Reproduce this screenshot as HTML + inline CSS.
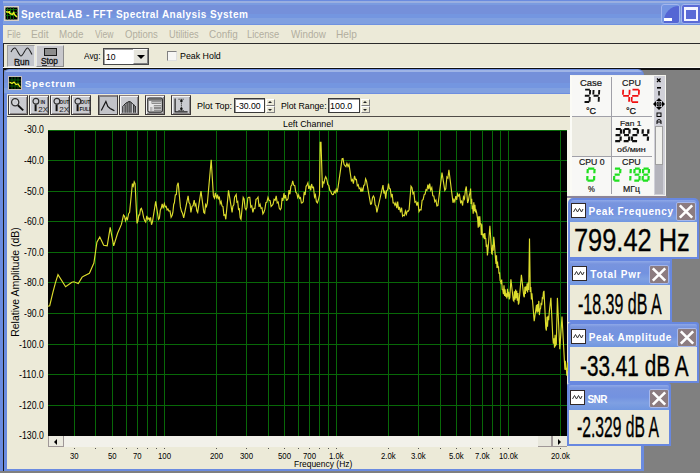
<!DOCTYPE html>
<html><head><meta charset="utf-8">
<style>
*{margin:0;padding:0;box-sizing:border-box}
html,body{width:700px;height:473px;overflow:hidden;background:#808080;font-family:"Liberation Sans",sans-serif;position:relative}
.a{position:absolute}
.tb{background:linear-gradient(#6a8bdf 0,#6a8bdf 1px,#9aafe0 1px,#9aafe0 3px,#7a9be0 3px,#7a9be0 5px,#7590da 5px,#7590da 14px,#7496e0 14px,#7496e0 18px,#80a0e0 18px,#80a0e0 24px,#6f92e0 24px)}
.ctb{background:linear-gradient(#9eb4e6 0,#9eb4e6 2px,#7490da 2px,#7490da 13px,#7496e0 13px,#7496e0 18px,#80a0e0 18px,#80a0e0 23px,#6d8ee0 23px)}
.beige{background:#ecead8}
.btn{position:absolute;top:95px;width:20px;height:20px;background:#cacbd0;border:1px solid #3c3838;border-top-color:#8a7e80;box-shadow:inset 1px 1px 0 #f4f4f4,inset -1px -1px 0 #8c8888}
.btn.p{background:#c2c3c8;box-shadow:inset 1px 1px 0 #808080}
.btn svg{position:absolute;left:0;top:0}
</style></head><body>

<div class="a tb" style="left:0;top:0;width:700px;height:25px"></div>
<div class="a" style="left:0;top:0;width:3px;height:473px;background:#6a8be0"></div>
<svg class="a" style="left:4px;top:6px" width="15" height="15" viewBox="0 0 15 15">
<rect x="0.75" y="0.75" width="13.5" height="13.5" fill="#000" stroke="#d8d0c8" stroke-width="1.5"/>
<path d="M1.5 3.5H13.5M1.5 6.5H13.5M1.5 9.5H13.5M3.5 1.5V13.5M6.5 1.5V13.5M9.5 1.5V13.5" stroke="#0a6a0a" stroke-width="0.9"/>
<path d="M2 5.6L5.2 6.5L5.4 5.2L5.7 7.5L8.4 8.4L9.8 6.5L10.3 8.1L12.8 11.1" stroke="#f0f020" stroke-width="1.4" fill="none"/>
</svg>
<div class="a" style="left:21.00px;top:15.14px;font-size:10.0px;line-height:0;font-weight:bold;color:#fff;white-space:nowrap;letter-spacing:0.455px;">SpectraLAB - FFT Spectral Analysis System</div>
<div class="a" style="left:661px;top:4px;width:19px;height:20px;border:1px solid #a2b6ee;border-radius:3px;background:#7494e2;overflow:hidden"><div style="position:absolute;left:2px;top:1px;width:30px;height:30px;border-radius:15px 0 0 0;background:#5566d4"></div></div>
<div class="a" style="left:664px;top:18px;width:8px;height:3px;background:#fff"></div>
<div class="a" style="left:681px;top:4px;width:21px;height:20px;border:1px solid #a2b6ee;border-radius:3px;background:#5a6ad6"></div>
<div class="a" style="left:684px;top:7px;width:14px;height:14px;border:2px solid #f4f4ff;border-top-width:3px;background:#5a6ad6"></div>
<div class="a beige" style="left:3px;top:25px;width:697px;height:18px"></div>
<div class="a" style="left:7.38px;top:34.43px;font-size:10.6px;line-height:0;color:#b2ae9f;white-space:nowrap;transform:scaleX(0.8025);transform-origin:0 0;">File</div>
<div class="a" style="left:31.43px;top:34.43px;font-size:10.6px;line-height:0;color:#b2ae9f;white-space:nowrap;transform:scaleX(0.9653);transform-origin:0 0;">Edit</div>
<div class="a" style="left:58.77px;top:34.43px;font-size:10.6px;line-height:0;color:#b2ae9f;white-space:nowrap;transform:scaleX(0.9243);transform-origin:0 0;">Mode</div>
<div class="a" style="left:94.52px;top:34.43px;font-size:10.6px;line-height:0;color:#b2ae9f;white-space:nowrap;transform:scaleX(0.8106);transform-origin:0 0;">View</div>
<div class="a" style="left:124.55px;top:34.43px;font-size:10.6px;line-height:0;color:#b2ae9f;white-space:nowrap;transform:scaleX(0.8989);transform-origin:0 0;">Options</div>
<div class="a" style="left:168.71px;top:34.43px;font-size:10.6px;line-height:0;color:#b2ae9f;white-space:nowrap;transform:scaleX(0.8667);transform-origin:0 0;">Utilities</div>
<div class="a" style="left:208.93px;top:34.43px;font-size:10.6px;line-height:0;color:#b2ae9f;white-space:nowrap;transform:scaleX(0.9388);transform-origin:0 0;">Config</div>
<div class="a" style="left:247.21px;top:34.43px;font-size:10.6px;line-height:0;color:#b2ae9f;white-space:nowrap;transform:scaleX(0.8832);transform-origin:0 0;">License</div>
<div class="a" style="left:290.81px;top:34.43px;font-size:10.6px;line-height:0;color:#b2ae9f;white-space:nowrap;transform:scaleX(0.9255);transform-origin:0 0;">Window</div>
<div class="a" style="left:336.14px;top:34.43px;font-size:10.6px;line-height:0;color:#b2ae9f;white-space:nowrap;transform:scaleX(0.9561);transform-origin:0 0;">Help</div>
<div class="a" style="left:3px;top:43px;width:697px;height:1px;background:#2a2a2a"></div>
<div class="a beige" style="left:3px;top:44px;width:697px;height:24px"></div>
<div class="a" style="left:3px;top:43px;width:1px;height:26px;background:#2a2a2a"></div>
<div class="a" style="left:3px;top:67px;width:697px;height:1px;background:#f8f8f0"></div>
<div class="a" style="left:3px;top:68px;width:697px;height:2px;background:#101010"></div>
<div class="a" style="left:7px;top:45px;width:28px;height:22px;background:#c4c6cc;border:1px solid #9c9c9c;border-right-color:#e8e8e8;border-bottom-color:#e8e8e8"></div>
<svg class="a" style="left:10px;top:47px" width="24" height="11" viewBox="0 0 24 11"><path d="M1 5C2.5 2 4 1 5 1C6.5 1 9 9 11 9C13 9 15.5 1 17.5 1C19 1 20.5 5 22 7.5" stroke="#202020" stroke-width="1.05" fill="none"/></svg>
<div class="a" style="left:14.30px;top:62.15px;font-size:8.5px;line-height:0;color:#111;white-space:nowrap;transform:scaleX(0.9931);transform-origin:0 0;-webkit-text-stroke:0.3px #111;">Run</div>
<div class="a" style="left:15px;top:65px;width:5px;height:1px;background:#333"></div>
<div class="a" style="left:36px;top:45px;width:28px;height:22px;background:#c8c8cc;border:1px solid #e8e8e8;border-right-color:#8c8c8c;border-bottom-color:#8c8c8c"></div>
<div class="a" style="left:44px;top:48px;width:13px;height:8px;background:#8c8c8c;border:1px solid #181818"></div>
<div class="a" style="left:41.41px;top:61.35px;font-size:8.5px;line-height:0;color:#111;white-space:nowrap;transform:scaleX(0.9643);transform-origin:0 0;-webkit-text-stroke:0.3px #111;">Stop</div>
<div class="a" style="left:42px;top:65px;width:5px;height:1px;background:#333"></div>
<div class="a" style="left:83.90px;top:56.45px;font-size:8.5px;line-height:0;color:#000;white-space:nowrap;transform:scaleX(0.9752);transform-origin:0 0;">Avg:</div>
<div class="a" style="left:103px;top:48px;width:46px;height:17px;background:#fff;border:1px solid #4a4a4a;box-shadow:inset 1px 1px 0 #a0a0a0"></div>
<div class="a" style="left:106.45px;top:56.88px;font-size:9.3px;line-height:0;color:#000;white-space:nowrap;transform:scaleX(0.9247);transform-origin:0 0;">10</div>
<div class="a" style="left:133px;top:49px;width:15px;height:15px;background:#e6e5dc;border:1px solid #fafafa;border-right-color:#808080;border-bottom-color:#808080"></div>
<div class="a" style="left:137px;top:55px;width:0;height:0;border-left:4px solid transparent;border-right:4px solid transparent;border-top:4px solid #000"></div>
<div class="a" style="left:167px;top:51px;width:10px;height:10px;background:#f6f6f4;border:1px solid #808080;border-right-color:#e0e0e0;border-bottom-color:#e0e0e0"></div>
<div class="a" style="left:180.28px;top:56.32px;font-size:8.6px;line-height:0;color:#000;white-space:nowrap;transform:scaleX(1.0286);transform-origin:0 0;">Peak Hold</div>
<div class="a" style="left:3px;top:69px;width:641px;height:402px;background:#6a8be0;border-radius:6px 6px 0 0"></div>
<div class="a" style="left:3px;top:69px;width:1px;height:404px;background:#181818"></div>
<div class="a ctb" style="left:4px;top:70px;width:639px;height:24px;border-radius:5px 5px 0 0"></div>
<div class="a beige" style="left:7px;top:94px;width:634px;height:375px"></div>
<svg class="a" style="left:8px;top:76px" width="14" height="14" viewBox="0 0 14 14">
<rect x="0.5" y="0.5" width="13" height="13" fill="#000" stroke="#c8c0b8"/>
<path d="M1 4H13M1 7H13M1 10H13M4 1V13M7 1V13M10 1V13" stroke="#0a6a0a" stroke-width="0.8"/>
<path d="M1.5 6L4 7.5L6 6L8 8.5L10 8L12.5 11.5" stroke="#f0f020" stroke-width="1.2" fill="none"/>
</svg>
<div class="a" style="left:24.70px;top:83.97px;font-size:9.6px;line-height:0;font-weight:bold;color:#fff;white-space:nowrap;letter-spacing:0.886px;">Spectrum</div>
<div class="a" style="left:7px;top:116px;width:634px;height:1px;background:#504c48"></div>
<div class="btn" style="left:8px"><svg width="19" height="19" viewBox="0 0 19 19"><circle cx="6.2" cy="6.2" r="3.6" fill="none" stroke="#303030" stroke-width="1.3"/><circle cx="6.2" cy="6.2" r="2.2" fill="none" stroke="#f0f0f0" stroke-width="0.7" stroke-dasharray="1 1"/><path d="M8.9 9.2L14.2 14.4" stroke="#101010" stroke-width="1.9"/></svg></div>
<div class="btn" style="left:29px"><svg width="19" height="19" viewBox="0 0 19 19"><circle cx="5.9" cy="5.2" r="2.9" fill="none" stroke="#303030" stroke-width="1.2"/><path d="M5.6 8.6V15.2" stroke="#101010" stroke-width="2"/><text x="10.5" y="8.3" font-size="4.6" font-family="Liberation Sans" font-weight="bold" fill="#202020">IN</text><text x="8.2" y="15.6" font-size="8" font-family="Liberation Sans" fill="#202020" transform="scale(1 1)">2X</text></svg></div>
<div class="btn" style="left:50px"><svg width="19" height="19" viewBox="0 0 19 19"><circle cx="5.9" cy="5.2" r="2.9" fill="none" stroke="#303030" stroke-width="1.2"/><path d="M5.6 8.6V15.2" stroke="#101010" stroke-width="2"/><text x="8.6" y="8.3" font-size="4.6" font-family="Liberation Sans" font-weight="bold" fill="#202020">OUT</text><text x="8.2" y="15.6" font-size="8" font-family="Liberation Sans" fill="#202020">2X</text></svg></div>
<div class="btn" style="left:71px"><svg width="19" height="19" viewBox="0 0 19 19"><circle cx="5.9" cy="5.2" r="2.9" fill="none" stroke="#303030" stroke-width="1.2"/><path d="M5.6 8.6V15.2" stroke="#101010" stroke-width="2"/><text x="8.6" y="8.3" font-size="4.6" font-family="Liberation Sans" font-weight="bold" fill="#202020">OUT</text><text x="7.4" y="14.6" font-size="5" font-family="Liberation Sans" font-weight="bold" fill="#202020">FULL</text></svg></div>
<div class="btn p" style="left:98px"><svg width="19" height="19" viewBox="0 0 19 19"><path d="M2.3 14.4L6.9 5.4L8.8 10.5L11.1 12.5L12.8 13.4L15.4 14.8" stroke="#151515" stroke-width="1.2" fill="none"/></svg></div>
<div class="btn" style="left:119px"><svg width="19" height="19" viewBox="0 0 19 19"><path d="M2.8 16.8V10.8M5.1 16.8V8.5M7.1 16.8V6.6M9.1 16.8V5.6M11 16.8V6.2M13.7 16.8V8.5M15.3 16.8V10.5" stroke="#202020" stroke-width="1.1"/><path d="M2.5 10.8C4.5 8.5 6 6.6 7.1 6.6C8 5.6 10 5.2 11 6.2C12.5 7.5 14 9.5 16 11.2" stroke="#202020" stroke-width="1" fill="none"/></svg></div>
<div class="btn" style="left:145px"><svg width="19" height="19" viewBox="0 0 19 19"><rect x="1.8" y="2.1" width="14.6" height="14" rx="1.5" fill="#e8e8e8" stroke="#303030" stroke-width="1.2"/><rect x="2.4" y="2.6" width="13.4" height="2.2" fill="#707070"/><path d="M5.6 6.2H15.2M7.9 10.2H15.2M7.9 13.8H15.2" stroke="#303030" stroke-width="2.6"/><path d="M5.6 6.2H15.2M7.9 10.2H15.2M7.9 13.8H15.2" stroke="#f4f4f4" stroke-width="1.2"/><path d="M4 12H6.5M4 14H6.5" stroke="#606060" stroke-width="0.7"/></svg></div>
<div class="btn" style="left:171px"><svg width="19" height="19" viewBox="0 0 19 19"><path d="M3.1 2.5V15.8H15.6" stroke="#202020" stroke-width="1.2" fill="none"/><path d="M6.5 3.2H12.5M9.4 3.2V14.5M6.5 14.5H12.5" stroke="#303030" stroke-width="1" stroke-dasharray="1.2 0.8"/><circle cx="9.4" cy="5" r="1.3" fill="#101010"/><circle cx="9.4" cy="12.7" r="1.3" fill="#101010"/></svg></div>
<div class="a" style="left:197.16px;top:106.22px;font-size:8.6px;line-height:0;color:#000;white-space:nowrap;transform:scaleX(1.0503);transform-origin:0 0;">Plot Top:</div>
<div class="a" style="left:234px;top:98px;width:31px;height:15px;background:#fff;border:1px solid #3a3a3a;box-shadow:inset 1px 1px 0 #9a9a9a"></div>
<div class="a" style="left:235.69px;top:106.02px;font-size:8.6px;line-height:0;color:#000;white-space:nowrap;transform:scaleX(1.0127);transform-origin:0 0;">-30.00</div>
<div class="a" style="left:281.19px;top:106.42px;font-size:8.6px;line-height:0;color:#000;white-space:nowrap;transform:scaleX(1.0161);transform-origin:0 0;">Plot Range:</div>
<div class="a" style="left:328px;top:98px;width:32px;height:15px;background:#fff;border:1px solid #3a3a3a;box-shadow:inset 1px 1px 0 #9a9a9a"></div>
<div class="a" style="left:330.08px;top:106.42px;font-size:8.6px;line-height:0;color:#000;white-space:nowrap;transform:scaleX(1.0388);transform-origin:0 0;">100.0</div>
<div class="a" style="left:266px;top:99px;width:9px;height:7px;background:#ecead8;border:1px solid #fff;border-right-color:#808080;border-bottom-color:#808080"></div>
<div class="a" style="left:266px;top:106px;width:9px;height:7px;background:#ecead8;border:1px solid #fff;border-right-color:#808080;border-bottom-color:#808080"></div>
<div class="a" style="left:268px;top:101px;border-left:2px solid transparent;border-right:2px solid transparent;border-bottom:2px solid #222"></div>
<div class="a" style="left:268px;top:109px;border-left:2px solid transparent;border-right:2px solid transparent;border-top:2px solid #222"></div>
<div class="a" style="left:361px;top:99px;width:9px;height:7px;background:#ecead8;border:1px solid #fff;border-right-color:#808080;border-bottom-color:#808080"></div>
<div class="a" style="left:361px;top:106px;width:9px;height:7px;background:#ecead8;border:1px solid #fff;border-right-color:#808080;border-bottom-color:#808080"></div>
<div class="a" style="left:363px;top:101px;border-left:2px solid transparent;border-right:2px solid transparent;border-bottom:2px solid #222"></div>
<div class="a" style="left:363px;top:109px;border-left:2px solid transparent;border-right:2px solid transparent;border-top:2px solid #222"></div>
<div class="a" style="left:283.16px;top:123.69px;font-size:8.4px;line-height:0;color:#000;white-space:nowrap;transform:scaleX(1.0560);transform-origin:0 0;">Left Channel</div>
<svg class="a" style="left:0;top:0" width="700" height="473">
<rect x="48" y="130" width="519" height="306" fill="#000"/>
<g stroke="#086808" stroke-width="1"><line x1="74.5" y1="130" x2="74.5" y2="436"/><line x1="95.5" y1="130" x2="95.5" y2="436"/><line x1="112.5" y1="130" x2="112.5" y2="436"/><line x1="126.5" y1="130" x2="126.5" y2="436"/><line x1="137.5" y1="130" x2="137.5" y2="436"/><line x1="147.5" y1="130" x2="147.5" y2="436"/><line x1="156.5" y1="130" x2="156.5" y2="436"/><line x1="164.5" y1="130" x2="164.5" y2="436"/><line x1="216.5" y1="130" x2="216.5" y2="436"/><line x1="246.5" y1="130" x2="246.5" y2="436"/><line x1="268.5" y1="130" x2="268.5" y2="436"/><line x1="284.5" y1="130" x2="284.5" y2="436"/><line x1="298.5" y1="130" x2="298.5" y2="436"/><line x1="309.5" y1="130" x2="309.5" y2="436"/><line x1="319.5" y1="130" x2="319.5" y2="436"/><line x1="328.5" y1="130" x2="328.5" y2="436"/><line x1="336.5" y1="130" x2="336.5" y2="436"/><line x1="388.5" y1="130" x2="388.5" y2="436"/><line x1="418.5" y1="130" x2="418.5" y2="436"/><line x1="440.5" y1="130" x2="440.5" y2="436"/><line x1="456.5" y1="130" x2="456.5" y2="436"/><line x1="470.5" y1="130" x2="470.5" y2="436"/><line x1="482.5" y1="130" x2="482.5" y2="436"/><line x1="492.5" y1="130" x2="492.5" y2="436"/><line x1="500.5" y1="130" x2="500.5" y2="436"/><line x1="508.5" y1="130" x2="508.5" y2="436"/><line x1="560.5" y1="130" x2="560.5" y2="436"/><line x1="48" y1="130.5" x2="567" y2="130.5"/><line x1="48" y1="160.5" x2="567" y2="160.5"/><line x1="48" y1="191.5" x2="567" y2="191.5"/><line x1="48" y1="221.5" x2="567" y2="221.5"/><line x1="48" y1="252.5" x2="567" y2="252.5"/><line x1="48" y1="282.5" x2="567" y2="282.5"/><line x1="48" y1="313.5" x2="567" y2="313.5"/><line x1="48" y1="344.5" x2="567" y2="344.5"/><line x1="48" y1="374.5" x2="567" y2="374.5"/><line x1="48" y1="405.5" x2="567" y2="405.5"/><line x1="48" y1="436.5" x2="567" y2="436.5"/></g>
<polyline points="47.8,306.3 49.7,305.7 52.9,292.4 55.4,282.9 58.0,274.6 65.6,286.7 71.9,282.2 73.8,281.8 78.3,283.5 82.1,277.1 84.0,275.9 89.4,273.3 93.9,263.0 96.9,242.2 99.8,236.9 103.7,245.2 107.2,245.8 110.2,227.4 113.7,245.8 117.6,233.3 121.4,224.4 123.5,215.0 124.5,216.2 125.5,220.7 126.5,217.6 127.5,219.3 128.6,213.7 129.6,212.4 132.4,183.6 133.3,186.0 134.2,181.8 135.1,183.6 137.0,223.4 137.9,221.1 138.8,215.1 139.6,215.0 140.5,209.3 141.4,208.3 142.5,211.7 143.6,217.4 144.7,220.7 145.7,222.0 146.8,215.9 147.8,219.5 148.8,217.9 149.7,220.2 150.6,217.3 151.5,224.8 152.4,222.0 155.7,201.4 158.5,219.3 159.4,218.2 160.3,210.1 161.2,208.3 162.2,204.0 163.2,208.3 164.3,203.7 165.3,206.9 166.2,206.4 167.1,210.0 168.0,209.1 168.9,211.0 170.0,210.8 171.1,217.2 172.2,215.2 172.9,212.2 173.7,204.4 174.4,202.8 175.3,195.0 176.3,194.6 177.2,185.3 178.2,182.7 180.4,206.9 181.5,211.3 182.6,213.5 183.7,217.9 188.1,195.9 189.0,202.6 190.0,204.0 190.9,212.4 192.0,206.3 193.1,205.7 194.2,200.0 195.1,205.6 195.9,204.1 196.8,210.8 197.7,212.4 201.0,191.0 203.8,212.4 204.7,213.3 205.6,204.7 206.5,206.6 207.4,202.8 211.2,159.7 213.4,195.9 214.4,198.1 215.4,192.9 216.5,198.5 217.5,194.6 218.4,199.4 219.3,196.5 220.2,203.6 221.1,201.4 222.0,205.9 223.0,206.6 223.9,215.3 224.9,214.7 225.8,219.3 228.5,190.4 232.1,212.4 232.9,206.1 233.8,204.8 234.6,197.2 235.4,195.9 236.2,194.6 236.9,202.1 237.7,201.4 238.5,209.4 239.3,208.8 240.2,217.8 241.0,219.3 243.2,197.3 244.1,198.9 245.1,208.1 246.0,209.7 246.9,207.7 247.8,198.0 248.7,197.3 249.8,197.3 250.8,207.0 251.8,205.8 252.9,212.4 253.9,208.3 254.9,208.5 256.0,199.4 257.0,198.7 258.0,197.1 259.1,206.9 260.1,204.4 261.1,208.3 262.0,207.8 262.9,213.9 263.8,212.4 264.9,209.2 265.9,202.7 266.9,202.2 268.0,197.3 269.0,200.3 270.1,200.7 271.1,206.6 272.1,205.5 273.1,204.1 274.1,199.3 275.2,200.2 276.2,195.9 277.2,202.9 278.2,202.0 279.3,208.3 280.3,209.7 281.2,208.0 282.1,197.9 283.0,200.7 283.9,193.2 284.7,198.4 285.5,195.1 286.4,200.3 287.2,200.0 288.1,198.6 289.0,190.0 289.9,194.3 290.9,186.2 291.8,185.1 292.7,180.8 293.7,185.2 294.8,185.7 295.8,192.3 296.8,193.2 297.7,197.4 298.6,195.0 299.6,198.5 300.5,197.6 301.4,203.0 302.3,202.8 303.2,201.7 304.2,191.8 305.1,195.0 306.1,186.3 307.0,185.0 307.9,182.8 308.8,188.8 309.8,185.7 310.7,190.4 311.6,184.0 312.5,187.7 313.5,187.2 314.5,197.0 315.4,194.9 316.4,201.7 317.4,202.8 318.4,199.8 319.5,195.0 320.2,142.4 321.0,142.4 322.4,187.7 323.2,182.2 324.0,182.9 324.9,178.7 325.7,176.7 326.7,178.9 327.8,184.6 328.8,185.3 329.8,190.4 330.7,191.1 331.6,193.7 332.5,194.6 333.4,194.5 334.3,191.4 335.2,192.9 336.2,189.4 337.1,192.4 338.0,187.7 342.1,158.8 343.0,158.5 344.0,164.4 344.9,165.7 345.9,166.7 346.9,163.3 348.0,166.4 349.0,164.3 351.4,180.8 352.4,179.5 353.4,183.6 354.5,175.8 355.5,179.5 356.4,179.4 357.3,185.8 358.2,184.8 359.2,188.6 360.1,188.1 361.0,191.8 361.9,188.5 362.8,191.5 363.8,185.2 364.7,185.0 365.6,178.8 366.5,180.8 370.6,204.2 371.5,203.8 372.5,197.7 373.4,196.0 374.3,197.7 375.1,204.8 376.0,206.0 376.9,212.4 383.0,185.0 383.9,193.5 384.8,190.6 385.7,198.7 386.6,190.7 387.6,190.0 388.5,183.6 389.4,188.6 390.3,188.9 391.2,196.4 392.2,194.0 393.1,202.8 394.0,202.8 394.9,205.1 395.8,202.9 396.8,208.2 397.7,201.6 398.6,209.7 399.5,206.9 400.5,212.3 401.6,207.7 402.6,216.2 403.6,215.2 404.5,215.6 405.4,211.1 406.4,214.2 407.3,210.9 408.2,211.2 409.1,209.7 411.0,186.3 412.0,187.8 413.0,193.7 413.9,192.4 414.9,202.2 415.9,201.4 416.9,205.5 417.9,201.8 419.0,211.6 420.0,209.7 421.1,209.8 422.1,200.4 423.1,199.6 424.2,194.6 425.1,194.1 426.0,189.7 426.9,190.3 427.9,184.6 428.8,189.1 429.7,183.6 430.7,190.1 431.8,187.6 432.8,195.7 433.8,196.0 434.8,201.7 435.9,200.0 436.9,205.9 437.9,205.5 442.0,172.6 444.8,190.4 445.8,188.9 446.9,176.9 447.9,178.1 448.9,169.8 453.0,202.8 453.9,199.5 454.8,201.7 455.8,196.1 456.7,199.9 457.6,193.8 458.5,196.0 459.5,194.5 460.6,202.6 461.6,201.2 462.6,205.5 463.5,196.9 464.5,199.0 465.4,190.2 466.3,186.5 467.6,203.0 468.4,200.5 469.3,195.2 470.1,192.8 470.6,188.5 471.1,204.0 471.7,198.9 472.2,209.2 472.7,205.5 473.2,213.8 473.8,202.2 474.3,211.2 474.9,204.8 475.4,211.4 476.0,210.3 476.5,211.8 477.7,219.4 478.2,227.7 478.7,216.4 479.3,226.6 479.8,216.4 480.3,224.5 480.8,223.0 481.3,235.1 481.8,224.3 482.3,234.6 482.8,234.6 483.3,237.6 483.8,233.6 484.3,239.1 484.8,233.0 485.3,238.4 485.8,238.6 486.3,246.9 486.9,244.6 487.4,255.4 487.9,251.1 489.9,225.8 491.7,253.7 492.2,254.1 492.7,244.9 493.2,250.7 493.7,236.7 494.2,241.0 495.5,258.7 496.0,263.9 496.5,255.3 497.0,268.1 497.5,261.6 498.0,267.6 498.5,266.2 499.0,273.8 499.6,272.4 500.1,280.5 500.6,281.5 501.2,284.1 501.7,279.6 502.2,289.4 502.8,289.8 503.4,294.2 504.0,285.4 504.6,295.9 505.1,289.4 505.7,296.8 506.3,293.3 506.9,298.5 507.5,288.8 508.1,296.8 508.6,291.9 509.2,299.4 509.8,297.9 510.9,279.3 513.3,300.2 513.9,301.1 514.4,291.2 515.0,299.6 515.6,289.6 516.1,298.3 516.7,290.9 517.3,300.7 517.9,293.1 518.4,304.5 519.0,302.6 521.4,274.7 523.7,295.6 524.3,297.3 524.9,286.9 525.4,294.0 526.0,286.3 526.5,290.7 527.1,283.5 527.6,292.4 528.2,282.2 528.7,290.0 529.5,238.4 530.3,292.0 530.8,287.0 531.4,299.5 531.9,293.3 534.2,321.2 536.5,304.9 537.1,312.8 537.7,304.1 538.2,311.6 538.8,300.9 539.4,315.1 540.0,309.5 540.6,308.3 541.1,302.8 541.7,305.1 542.3,297.9 542.9,298.4 543.4,292.5 544.0,290.9 545.8,328.1 546.4,330.6 547.0,316.7 547.5,326.8 548.1,315.7 548.7,320.1 549.3,311.9 550.9,297.9 552.8,337.4 553.4,343.7 554.0,338.2 554.5,347.6 555.1,334.8 555.7,345.3 556.3,344.4 557.4,297.9 559.8,349.1 562.0,316.5 564.4,360.7 564.9,369.6 565.3,360.9 565.8,369.9 566.3,367.7 566.8,375.7 567.4,362.6 567.9,371.2 568.4,366.6 568.9,374.9 569.5,368.5 570.0,372.0 570.6,370.6 571.2,375.7 571.8,367.9 572.4,374.5 572.9,370.0 573.5,378.4 574.1,374.7 574.7,378.6 575.3,371.4 575.9,380.8 576.5,376.2 577.1,385.0 577.6,372.1 578.2,385.9 578.8,377.8 579.4,381.9 580.0,380.0" fill="none" stroke="#dcdc2c" stroke-width="1.15"/>
</svg>
<div class="a" style="left:24.36px;top:130.37px;font-size:10.2px;line-height:0;color:#000;white-space:nowrap;transform:scaleX(0.8578);transform-origin:0 0;">-30.0</div>
<div class="a" style="left:24.36px;top:160.97px;font-size:10.2px;line-height:0;color:#000;white-space:nowrap;transform:scaleX(0.8578);transform-origin:0 0;">-40.0</div>
<div class="a" style="left:24.36px;top:191.57px;font-size:10.2px;line-height:0;color:#000;white-space:nowrap;transform:scaleX(0.8578);transform-origin:0 0;">-50.0</div>
<div class="a" style="left:24.36px;top:222.17px;font-size:10.2px;line-height:0;color:#000;white-space:nowrap;transform:scaleX(0.8578);transform-origin:0 0;">-60.0</div>
<div class="a" style="left:24.36px;top:252.77px;font-size:10.2px;line-height:0;color:#000;white-space:nowrap;transform:scaleX(0.8578);transform-origin:0 0;">-70.0</div>
<div class="a" style="left:24.36px;top:283.37px;font-size:10.2px;line-height:0;color:#000;white-space:nowrap;transform:scaleX(0.8578);transform-origin:0 0;">-80.0</div>
<div class="a" style="left:24.36px;top:313.97px;font-size:10.2px;line-height:0;color:#000;white-space:nowrap;transform:scaleX(0.8578);transform-origin:0 0;">-90.0</div>
<div class="a" style="left:19.46px;top:344.57px;font-size:10.2px;line-height:0;color:#000;white-space:nowrap;transform:scaleX(0.8582);transform-origin:0 0;">-100.0</div>
<div class="a" style="left:19.45px;top:375.17px;font-size:10.2px;line-height:0;color:#000;white-space:nowrap;transform:scaleX(0.8832);transform-origin:0 0;">-110.0</div>
<div class="a" style="left:19.46px;top:405.77px;font-size:10.2px;line-height:0;color:#000;white-space:nowrap;transform:scaleX(0.8582);transform-origin:0 0;">-120.0</div>
<div class="a" style="left:19.46px;top:436.37px;font-size:10.2px;line-height:0;color:#000;white-space:nowrap;transform:scaleX(0.8582);transform-origin:0 0;">-130.0</div>
<div class="a" style="left:-40px;top:277px;width:110px;text-align:center;font-size:10.5px;line-height:10px;transform:rotate(-90deg);white-space:nowrap">Relative Amplitude (dB)</div>
<div class="a" style="left:48px;top:436px;width:519px;height:11px;background:#f2f1ea;border-left:1px solid #a09898"></div>
<div class="a" style="left:49px;top:436px;width:15px;height:11px;background:#ecebe0;border-right:1px solid #a09898;border-bottom:1px solid #a09898"></div>
<div class="a" style="left:54px;top:439px;border-top:3px solid transparent;border-bottom:3px solid transparent;border-right:3px solid #000"></div>
<div class="a" style="left:538px;top:436px;width:14px;height:11px;background:#e8e7dc;border-right:1px solid #a09898;border-bottom:1px solid #a09898"></div>
<div class="a" style="left:552px;top:436px;width:15px;height:11px;background:#ecebe0;border-left:1px solid #a09898;border-bottom:1px solid #a09898"></div>
<div class="a" style="left:558px;top:439px;border-top:3px solid transparent;border-bottom:3px solid transparent;border-left:3px solid #000"></div>
<div class="a" style="left:73.8px;top:447.5px;width:1px;height:1.2px;background:#555"></div>
<div class="a" style="left:95.3px;top:447.5px;width:1px;height:1.2px;background:#555"></div>
<div class="a" style="left:112.0px;top:447.5px;width:1px;height:1.2px;background:#555"></div>
<div class="a" style="left:125.6px;top:447.5px;width:1px;height:1.2px;background:#555"></div>
<div class="a" style="left:137.2px;top:447.5px;width:1px;height:1.2px;background:#555"></div>
<div class="a" style="left:147.2px;top:447.5px;width:1px;height:1.2px;background:#555"></div>
<div class="a" style="left:156.0px;top:447.5px;width:1px;height:1.2px;background:#555"></div>
<div class="a" style="left:163.8px;top:447.5px;width:1px;height:1.2px;background:#555"></div>
<div class="a" style="left:215.7px;top:447.5px;width:1px;height:1.2px;background:#555"></div>
<div class="a" style="left:246.0px;top:447.5px;width:1px;height:1.2px;background:#555"></div>
<div class="a" style="left:267.5px;top:447.5px;width:1px;height:1.2px;background:#555"></div>
<div class="a" style="left:284.2px;top:447.5px;width:1px;height:1.2px;background:#555"></div>
<div class="a" style="left:297.8px;top:447.5px;width:1px;height:1.2px;background:#555"></div>
<div class="a" style="left:309.4px;top:447.5px;width:1px;height:1.2px;background:#555"></div>
<div class="a" style="left:319.4px;top:447.5px;width:1px;height:1.2px;background:#555"></div>
<div class="a" style="left:328.2px;top:447.5px;width:1px;height:1.2px;background:#555"></div>
<div class="a" style="left:336.0px;top:447.5px;width:1px;height:1.2px;background:#555"></div>
<div class="a" style="left:387.9px;top:447.5px;width:1px;height:1.2px;background:#555"></div>
<div class="a" style="left:418.2px;top:447.5px;width:1px;height:1.2px;background:#555"></div>
<div class="a" style="left:439.7px;top:447.5px;width:1px;height:1.2px;background:#555"></div>
<div class="a" style="left:456.4px;top:447.5px;width:1px;height:1.2px;background:#555"></div>
<div class="a" style="left:470.0px;top:447.5px;width:1px;height:1.2px;background:#555"></div>
<div class="a" style="left:481.6px;top:447.5px;width:1px;height:1.2px;background:#555"></div>
<div class="a" style="left:491.6px;top:447.5px;width:1px;height:1.2px;background:#555"></div>
<div class="a" style="left:500.4px;top:447.5px;width:1px;height:1.2px;background:#555"></div>
<div class="a" style="left:508.2px;top:447.5px;width:1px;height:1.2px;background:#555"></div>
<div class="a" style="left:560.1px;top:447.5px;width:1px;height:1.2px;background:#555"></div>
<div class="a" style="left:69.98px;top:455.59px;font-size:8.4px;line-height:0;color:#000;white-space:nowrap;transform:scaleX(0.9200);transform-origin:0 0;">30</div>
<div class="a" style="left:108.18px;top:455.59px;font-size:8.4px;line-height:0;color:#000;white-space:nowrap;transform:scaleX(0.9200);transform-origin:0 0;">50</div>
<div class="a" style="left:133.30px;top:455.59px;font-size:8.4px;line-height:0;color:#000;white-space:nowrap;transform:scaleX(0.9200);transform-origin:0 0;">70</div>
<div class="a" style="left:157.66px;top:455.59px;font-size:8.4px;line-height:0;color:#000;white-space:nowrap;transform:scaleX(0.9340);transform-origin:0 0;">100</div>
<div class="a" style="left:209.59px;top:455.59px;font-size:8.4px;line-height:0;color:#000;white-space:nowrap;transform:scaleX(0.9338);transform-origin:0 0;">200</div>
<div class="a" style="left:239.96px;top:455.59px;font-size:8.4px;line-height:0;color:#000;white-space:nowrap;transform:scaleX(0.9337);transform-origin:0 0;">300</div>
<div class="a" style="left:278.17px;top:455.59px;font-size:8.4px;line-height:0;color:#000;white-space:nowrap;transform:scaleX(0.9337);transform-origin:0 0;">500</div>
<div class="a" style="left:303.28px;top:455.59px;font-size:8.4px;line-height:0;color:#000;white-space:nowrap;transform:scaleX(0.9338);transform-origin:0 0;">700</div>
<div class="a" style="left:328.90px;top:455.59px;font-size:8.4px;line-height:0;color:#000;white-space:nowrap;transform:scaleX(0.9260);transform-origin:0 0;">1.0k</div>
<div class="a" style="left:380.83px;top:455.59px;font-size:8.4px;line-height:0;color:#000;white-space:nowrap;transform:scaleX(0.9259);transform-origin:0 0;">2.0k</div>
<div class="a" style="left:411.20px;top:455.59px;font-size:8.4px;line-height:0;color:#000;white-space:nowrap;transform:scaleX(0.9259);transform-origin:0 0;">3.0k</div>
<div class="a" style="left:449.40px;top:455.59px;font-size:8.4px;line-height:0;color:#000;white-space:nowrap;transform:scaleX(0.9259);transform-origin:0 0;">5.0k</div>
<div class="a" style="left:474.52px;top:455.59px;font-size:8.4px;line-height:0;color:#000;white-space:nowrap;transform:scaleX(0.9259);transform-origin:0 0;">7.0k</div>
<div class="a" style="left:498.94px;top:455.59px;font-size:8.4px;line-height:0;color:#000;white-space:nowrap;transform:scaleX(0.9246);transform-origin:0 0;">10.0k</div>
<div class="a" style="left:550.87px;top:455.59px;font-size:8.4px;line-height:0;color:#000;white-space:nowrap;transform:scaleX(0.9246);transform-origin:0 0;">20.0k</div>
<div class="a" style="left:294.31px;top:463.92px;font-size:8.6px;line-height:0;color:#000;white-space:nowrap;transform:scaleX(0.9845);transform-origin:0 0;">Frequency (Hz)</div>
<div class="a" style="left:567px;top:130px;width:3px;height:66px;background:#f6f5ec"></div><div class="a" style="left:570px;top:75px;width:96px;height:121px;background:#f8f8f6;border:1px solid #f4f4ee;border-left:2px solid #fbfbf6"></div><div class="a" style="left:567px;top:196px;width:100px;height:2px;background:#8c8498"></div>
<div class="a" style="left:572px;top:116px;width:39px;height:40px;background:#ecebe2"></div>
<div class="a" style="left:572px;top:116px;width:80px;height:1px;background:#a0a0a8"></div>
<div class="a" style="left:572px;top:156px;width:80px;height:1px;background:#a0a0a8"></div>
<div class="a" style="left:611px;top:77px;width:1px;height:117px;background:#a0a0a8"></div>
<div class="a" style="left:654px;top:76px;width:11px;height:119px;background:#d0d0d8"></div>
<div class="a" style="left:655px;top:126px;width:8px;height:39px;background:#f0f0ec;border:1px solid #a0a0a0"></div>
<div class="a" style="left:655px;top:165px;width:8px;height:29px;background:#b4b4bc"></div>
<svg class="a" style="left:652px;top:76px" width="14" height="50" viewBox="0 0 14 50">
<path d="M5 2.5L8.5 6M8.5 2.5L5 6" stroke="#000" stroke-width="1.3"/>
<rect x="5" y="11" width="4" height="1.6" fill="#000"/>
<path d="M7 15V19.5" stroke="#000" stroke-width="1.3"/>
<path d="M7 22L10 25H4Z M7 34L10 31H4Z M1 28L4 25V31Z M13 28L10 25V31Z" fill="#000"/>
<circle cx="7" cy="28" r="2" fill="none" stroke="#000" stroke-width="1.1"/><circle cx="7" cy="28" r="0.9" fill="#000"/>
<rect x="5" y="37" width="4" height="3.5" fill="none" stroke="#000" stroke-width="1"/>
<path d="M5 48V44.5Q7 42.5 9 44.5V48M5 46H9" stroke="#000" stroke-width="1" fill="none"/>
</svg>
<svg class="a" style="left:0;top:0" width="700" height="473">
<g fill="#101010"><polygon points="585.20,88.70 589.91,88.70 589.82,90.60 585.11,90.60"/><polygon points="589.19,89.95 591.09,89.95 590.86,94.55 588.96,94.55"/><polygon points="588.84,97.05 590.74,97.05 590.51,101.66 588.61,101.66"/><polygon points="584.59,101.00 589.30,101.00 589.20,102.90 584.49,102.90"/><polygon points="584.89,94.85 589.60,94.85 589.51,96.75 584.80,96.75"/></g>
<g fill="#101010"><polygon points="598.29,89.95 600.19,89.95 599.96,94.55 598.06,94.55"/><polygon points="597.94,97.05 599.84,97.05 599.61,101.66 597.71,101.66"/><polygon points="592.59,89.95 594.49,89.95 594.26,94.55 592.36,94.55"/><polygon points="593.59,94.85 598.70,94.85 598.61,96.75 593.50,96.75"/></g>
<g fill="#f01010"><polygon points="628.75,89.86 630.50,89.86 630.26,94.64 628.51,94.64"/><polygon points="628.39,96.96 630.14,96.96 629.90,101.74 628.15,101.74"/><polygon points="622.30,89.86 624.05,89.86 623.81,94.64 622.06,94.64"/><polygon points="623.21,94.92 629.08,94.92 628.99,96.67 623.12,96.67"/></g>
<g fill="#f01010"><polygon points="632.52,88.70 638.79,88.70 638.71,90.45 632.43,90.45"/><polygon points="638.15,89.86 639.90,89.86 639.66,94.64 637.91,94.64"/><polygon points="631.89,101.15 638.17,101.15 638.08,102.90 631.81,102.90"/><polygon points="630.94,96.96 632.69,96.96 632.45,101.74 630.70,101.74"/><polygon points="632.21,94.92 638.48,94.92 638.39,96.67 632.12,96.67"/></g>
<g fill="#101010"><polygon points="615.87,127.90 620.85,127.90 620.74,130.10 615.76,130.10"/><polygon points="619.99,129.31 622.19,129.31 621.97,133.64 619.77,133.64"/><polygon points="619.63,136.46 621.83,136.46 621.61,140.79 619.41,140.79"/><polygon points="615.26,140.00 620.24,140.00 620.13,142.20 615.15,142.20"/><polygon points="615.57,133.95 620.54,133.95 620.43,136.15 615.46,136.15"/></g>
<g fill="#101010"><polygon points="624.37,127.90 629.35,127.90 629.24,130.10 624.26,130.10"/><polygon points="628.49,129.31 630.69,129.31 630.47,133.64 628.27,133.64"/><polygon points="628.13,136.46 630.33,136.46 630.11,140.79 627.91,140.79"/><polygon points="623.76,140.00 628.74,140.00 628.63,142.20 623.65,142.20"/><polygon points="622.89,129.31 625.09,129.31 624.87,133.64 622.67,133.64"/><polygon points="624.07,133.95 629.04,133.95 628.93,136.15 623.96,136.15"/></g>
<g fill="#101010"><polygon points="632.77,127.90 637.75,127.90 637.64,130.10 632.66,130.10"/><polygon points="636.89,129.31 639.09,129.31 638.87,133.64 636.67,133.64"/><polygon points="632.16,140.00 637.14,140.00 637.03,142.20 632.05,142.20"/><polygon points="630.93,136.46 633.13,136.46 632.91,140.79 630.71,140.79"/><polygon points="632.47,133.95 637.44,133.95 637.33,136.15 632.36,136.15"/></g>
<g fill="#101010"><polygon points="647.29,129.31 649.49,129.31 649.27,133.64 647.07,133.64"/><polygon points="646.93,136.46 649.13,136.46 648.91,140.79 646.71,140.79"/><polygon points="641.69,129.31 643.89,129.31 643.67,133.64 641.47,133.64"/><polygon points="642.87,133.95 647.84,133.95 647.73,136.15 642.76,136.15"/></g>
<g fill="#20e020"><polygon points="588.17,167.60 594.34,167.60 594.23,169.80 588.06,169.80"/><polygon points="593.48,169.01 595.68,169.01 595.47,173.29 593.27,173.29"/><polygon points="593.13,176.11 595.33,176.11 595.12,180.39 592.92,180.39"/><polygon points="587.57,179.60 593.74,179.60 593.63,181.80 587.46,181.80"/><polygon points="586.33,176.11 588.53,176.11 588.32,180.39 586.12,180.39"/><polygon points="586.68,169.01 588.88,169.01 588.67,173.29 586.47,173.29"/></g>
<g fill="#20e020"><polygon points="614.97,167.60 620.14,167.60 620.03,169.80 614.86,169.80"/><polygon points="619.28,169.01 621.48,169.01 621.27,173.29 619.07,173.29"/><polygon points="614.37,179.60 619.54,179.60 619.43,181.80 614.26,181.80"/><polygon points="613.13,176.11 615.33,176.11 615.12,180.39 612.92,180.39"/><polygon points="614.67,173.60 619.84,173.60 619.74,175.80 614.56,175.80"/></g>
<g fill="#20e020"><polygon points="629.68,169.01 631.88,169.01 631.67,173.29 629.47,173.29"/><polygon points="629.33,176.11 631.53,176.11 631.32,180.39 629.12,180.39"/></g>
<g fill="#20e020"><polygon points="634.97,167.60 639.75,167.60 639.63,169.80 634.86,169.80"/><polygon points="638.88,169.01 641.08,169.01 640.87,173.29 638.67,173.29"/><polygon points="638.53,176.11 640.73,176.11 640.52,180.39 638.32,180.39"/><polygon points="634.37,179.60 639.14,179.60 639.03,181.80 634.26,181.80"/><polygon points="633.48,169.01 635.68,169.01 635.47,173.29 633.27,173.29"/><polygon points="634.67,173.60 639.44,173.60 639.34,175.80 634.56,175.80"/></g>
<g fill="#20e020"><polygon points="643.57,167.60 648.74,167.60 648.63,169.80 643.46,169.80"/><polygon points="647.88,169.01 650.08,169.01 649.87,173.29 647.67,173.29"/><polygon points="647.53,176.11 649.73,176.11 649.52,180.39 647.32,180.39"/><polygon points="642.97,179.60 648.14,179.60 648.03,181.80 642.86,181.80"/><polygon points="641.73,176.11 643.93,176.11 643.72,180.39 641.52,180.39"/><polygon points="642.08,169.01 644.28,169.01 644.07,173.29 641.87,173.29"/><polygon points="643.26,173.60 648.44,173.60 648.33,175.80 643.16,175.80"/></g>
</svg>
<div class="a" style="left:580.24px;top:84.06px;font-size:8.2px;line-height:0;color:#181818;white-space:nowrap;transform:scaleX(1.1576);transform-origin:0 0;-webkit-text-stroke:0.2px #181818;">Case</div>
<div class="a" style="left:621.76px;top:84.06px;font-size:8.2px;line-height:0;color:#181818;white-space:nowrap;transform:scaleX(1.0920);transform-origin:0 0;-webkit-text-stroke:0.2px #181818;">CPU</div>
<div class="a" style="left:586.29px;top:110.85px;font-size:8.8px;line-height:0;color:#101010;white-space:nowrap;transform:scaleX(1.0222);transform-origin:0 0;-webkit-text-stroke:0.25px #101010;">°C</div>
<div class="a" style="left:626.29px;top:110.85px;font-size:8.8px;line-height:0;color:#101010;white-space:nowrap;transform:scaleX(1.0222);transform-origin:0 0;-webkit-text-stroke:0.25px #101010;">°C</div>
<div class="a" style="left:620.17px;top:123.59px;font-size:8.1px;line-height:0;color:#181818;white-space:nowrap;transform:scaleX(1.0357);transform-origin:0 0;-webkit-text-stroke:0.2px #181818;">Fan 1</div>
<div class="a" style="left:616.77px;top:150.49px;font-size:8.1px;line-height:0;color:#181818;white-space:nowrap;transform:scaleX(1.1116);transform-origin:0 0;-webkit-text-stroke:0.2px #181818;">об/мин</div>
<div class="a" style="left:578.68px;top:163.26px;font-size:8.2px;line-height:0;color:#181818;white-space:nowrap;transform:scaleX(1.0596);transform-origin:0 0;-webkit-text-stroke:0.2px #181818;">CPU 0</div>
<div class="a" style="left:621.87px;top:163.26px;font-size:8.2px;line-height:0;color:#181818;white-space:nowrap;transform:scaleX(1.0859);transform-origin:0 0;-webkit-text-stroke:0.2px #181818;">CPU</div>
<div class="a" style="left:588.32px;top:189.96px;font-size:8.2px;line-height:0;color:#181818;white-space:nowrap;transform:scaleX(0.9403);transform-origin:0 0;-webkit-text-stroke:0.2px #181818;">%</div>
<div class="a" style="left:623.26px;top:189.96px;font-size:8.2px;line-height:0;color:#181818;white-space:nowrap;transform:scaleX(1.0596);transform-origin:0 0;-webkit-text-stroke:0.2px #181818;">МГц</div>
<div class="a" style="left:568px;top:198px;width:131px;height:61px;background:#6888e0;border-radius:5px 5px 0 0"></div>
<div class="a" style="left:570px;top:200px;width:127px;height:22px;border-radius:4px 4px 0 0;background:linear-gradient(#8ea8e8 0,#7894de 3px,#7392e0 12px,#7fa0e2 18px,#7096e0 100%)"></div>
<div class="a" style="left:571px;top:203px;width:15px;height:15px;background:#fff;border:1.5px solid #302828"><svg width="12" height="12" viewBox="0 0 12 12" style="position:absolute;left:0;top:0"><path d="M1.5 8L3.5 4.5L5.5 8L7.5 4.5L9.5 8L11 5" stroke="#303030" stroke-width="1" fill="none"/></svg></div>
<div class="a" style="left:588.40px;top:211.84px;font-size:10.0px;line-height:0;font-weight:bold;color:#fff;white-space:nowrap;letter-spacing:0.608px;">Peak Frequency</div>
<div class="a" style="left:676px;top:202px;width:20px;height:19px;border:1px solid #a6b8ec;background:#8c7c80;border-radius:2px"><svg width="18" height="17" viewBox="0 0 18 17" style="position:absolute;left:0;top:0"><path d="M2.8 2.3L15.2 14.7M15.2 2.3L2.8 14.7" stroke="#fff" stroke-width="2.6"/></svg></div>
<div class="a" style="left:570px;top:222px;width:127px;height:35px;background:#ecead8"></div>
<div class="a" style="left:574.29px;top:240.56px;font-size:31.0px;line-height:0;color:#000;white-space:nowrap;transform:scaleX(0.8191);transform-origin:0 0;-webkit-text-stroke:0.35px #000;">799.42 Hz</div>
<div class="a" style="left:568px;top:259px;width:104px;height:63px;background:#6888e0;border-radius:0"></div>
<div class="a" style="left:570px;top:261px;width:100px;height:24px;border-radius:0;background:linear-gradient(#8ea8e8 0,#7894de 3px,#7392e0 12px,#7fa0e2 18px,#7096e0 100%)"></div>
<div class="a" style="left:572px;top:266px;width:15px;height:15px;background:#fff;border:1.5px solid #302828"><svg width="12" height="12" viewBox="0 0 12 12" style="position:absolute;left:0;top:0"><path d="M1.5 8L3.5 4.5L5.5 8L7.5 4.5L9.5 8L11 5" stroke="#303030" stroke-width="1" fill="none"/></svg></div>
<div class="a" style="left:590.30px;top:274.64px;font-size:10.0px;line-height:0;font-weight:bold;color:#fff;white-space:nowrap;letter-spacing:0.775px;">Total Pwr</div>
<div class="a" style="left:649px;top:265px;width:20px;height:19px;border:1px solid #a6b8ec;background:#8c7c80;border-radius:2px"><svg width="18" height="17" viewBox="0 0 18 17" style="position:absolute;left:0;top:0"><path d="M2.8 2.3L15.2 14.7M15.2 2.3L2.8 14.7" stroke="#fff" stroke-width="2.6"/></svg></div>
<div class="a" style="left:570px;top:285px;width:100px;height:35px;background:#ecead8"></div>
<div class="a" style="left:577.97px;top:303.56px;font-size:28.7px;line-height:0;color:#000;white-space:nowrap;transform:scaleX(0.5579);transform-origin:0 0;-webkit-text-stroke:0.35px #000;">-18.39 dB A</div>
<div class="a" style="left:568px;top:322px;width:131px;height:61px;background:#6888e0;border-radius:3px 3px 0 0"></div>
<div class="a" style="left:570px;top:324px;width:127px;height:23px;border-radius:2px 2px 0 0;background:linear-gradient(#8ea8e8 0,#7894de 3px,#7392e0 12px,#7fa0e2 18px,#7096e0 100%)"></div>
<div class="a" style="left:571px;top:329px;width:15px;height:15px;background:#fff;border:1.5px solid #302828"><svg width="12" height="12" viewBox="0 0 12 12" style="position:absolute;left:0;top:0"><path d="M1.5 8L3.5 4.5L5.5 8L7.5 4.5L9.5 8L11 5" stroke="#303030" stroke-width="1" fill="none"/></svg></div>
<div class="a" style="left:588.70px;top:338.14px;font-size:10.0px;line-height:0;font-weight:bold;color:#fff;white-space:nowrap;letter-spacing:0.608px;">Peak Amplitude</div>
<div class="a" style="left:677px;top:328px;width:20px;height:19px;border:1px solid #a6b8ec;background:#8c7c80;border-radius:2px"><svg width="18" height="17" viewBox="0 0 18 17" style="position:absolute;left:0;top:0"><path d="M2.8 2.3L15.2 14.7M15.2 2.3L2.8 14.7" stroke="#fff" stroke-width="2.6"/></svg></div>
<div class="a" style="left:570px;top:347px;width:127px;height:34px;background:#ecead8"></div>
<div class="a" style="left:579.86px;top:365.76px;font-size:28.7px;line-height:0;color:#000;white-space:nowrap;transform:scaleX(0.7241);transform-origin:0 0;-webkit-text-stroke:0.35px #000;">-33.41 dB A</div>
<div class="a" style="left:567px;top:383px;width:104px;height:63px;background:#6888e0;border-radius:3px 3px 0 0"></div>
<div class="a" style="left:569px;top:385px;width:100px;height:25px;border-radius:2px 2px 0 0;background:linear-gradient(#8ea8e8 0,#7894de 3px,#7392e0 12px,#7fa0e2 18px,#7096e0 100%)"></div>
<div class="a" style="left:570px;top:390px;width:15px;height:15px;background:#fff;border:1.5px solid #302828"><svg width="12" height="12" viewBox="0 0 12 12" style="position:absolute;left:0;top:0"><path d="M1.5 8L3.5 4.5L5.5 8L7.5 4.5L9.5 8L11 5" stroke="#303030" stroke-width="1" fill="none"/></svg></div>
<div class="a" style="left:587.60px;top:399.64px;font-size:10.0px;line-height:0;font-weight:bold;color:#fff;white-space:nowrap;letter-spacing:-0.650px;">SNR</div>
<div class="a" style="left:649px;top:389px;width:20px;height:19px;border:1px solid #a6b8ec;background:#8c7c80;border-radius:2px"><svg width="18" height="17" viewBox="0 0 18 17" style="position:absolute;left:0;top:0"><path d="M2.8 2.3L15.2 14.7M15.2 2.3L2.8 14.7" stroke="#fff" stroke-width="2.6"/></svg></div>
<div class="a" style="left:569px;top:410px;width:100px;height:34px;background:#ecead8"></div>
<div class="a" style="left:577.39px;top:427.36px;font-size:28.7px;line-height:0;color:#000;white-space:nowrap;transform:scaleX(0.5458);transform-origin:0 0;-webkit-text-stroke:0.35px #000;">-2.329 dB A</div>
<div class="a" style="left:0;top:471px;width:700px;height:2px;background:#808080"></div>
</body></html>
